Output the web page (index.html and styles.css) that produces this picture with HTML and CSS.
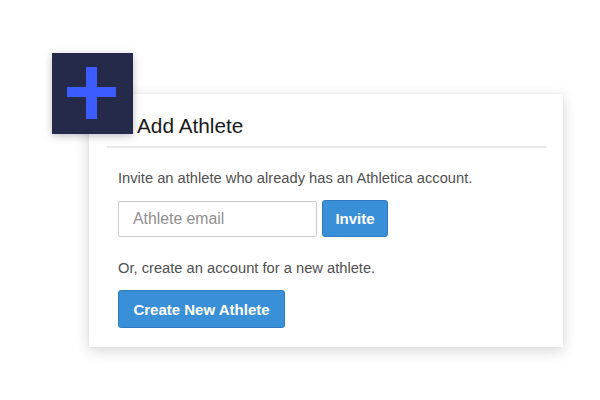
FILE: index.html
```html
<!DOCTYPE html>
<html>
<head>
<meta charset="utf-8">
<link rel="stylesheet" href="styles.css">
</head>
<body>
<div class="stage">
  <div class="card">
    <div class="card-header">
      <h2 class="title">Add Athlete</h2>
    </div>
    <div class="card-body">
      <p class="note">Invite an athlete who already has an Athletica account.</p>
      <div class="invite-row">
        <input class="email" type="text" placeholder="Athlete email">
        <button class="btn btn-invite">Invite</button>
      </div>
      <p class="note note-or">Or, create an account for a new athlete.</p>
      <button class="btn btn-create">Create New Athlete</button>
    </div>
  </div>
  <div class="badge">
    <svg width="81" height="81" viewBox="0 0 81 81">
      <rect x="34" y="14" width="11" height="52" fill="#3d5cff"/>
      <rect x="15" y="34" width="49" height="10" fill="#3d5cff"/>
    </svg>
  </div>
</div>
</body>
</html>
```
FILE: styles.css
```css
html, body {
  margin: 0;
  padding: 0;
  background: #ffffff;
  font-family: "Liberation Sans", Arial, Helvetica, sans-serif;
}
.stage {
  position: relative;
  width: 600px;
  height: 400px;
  padding: 94px 0 0 89px;
  box-sizing: border-box;
}
.card {
  width: 474px;
  height: 253px;
  box-sizing: border-box;
  background: #ffffff;
  box-shadow: 0 4px 14px rgba(0, 0, 0, 0.16), 0 0 3px rgba(0, 0, 0, 0.06);
}
.card-header {
  margin: 0 16px 0 18px;
  padding: 20px 0 9px 30px;
  border-bottom: 2px solid #e8e8e8;
}
.title {
  margin: 0;
  font-size: 20.8px;
  line-height: 23px;
  font-weight: normal;
  color: #1a1a1a;
}
.card-body {
  padding: 20px 29px 19px 29px;
}
.note {
  margin: 0;
  font-size: 14.7px;
  line-height: 20px;
  color: #505050;
}
.invite-row {
  display: flex;
  gap: 5px;
  margin-top: 13px;
}
.email {
  width: 199px;
  height: 36px;
  box-sizing: border-box;
  border: 1px solid #cccccc;
  border-radius: 2px;
  padding: 0 14px;
  font-family: inherit;
  font-size: 15.8px;
  color: #333;
  outline: none;
}
.email::placeholder {
  color: #8f8f8f;
}
.btn {
  font-family: inherit;
  background: #3a8fd9;
  border: 1px solid #2f7ac0;
  border-radius: 3px;
  color: #ffffff;
  cursor: pointer;
  box-sizing: border-box;
}
.btn-invite {
  width: 66px;
  height: 37px;
  margin-top: -1px;
  font-size: 15px;
  font-weight: bold;
}
.note-or {
  margin-top: 21px;
}
.btn-create {
  display: block;
  margin-top: 12px;
  width: 167px;
  height: 38px;
  font-size: 15px;
  font-weight: bold;
}
.badge {
  position: absolute;
  left: 52px;
  top: 53px;
  width: 81px;
  height: 81px;
  background: #252a4b;
  box-shadow: 0 2px 8px rgba(0, 0, 0, 0.25);
}
.badge svg {
  display: block;
}
```
